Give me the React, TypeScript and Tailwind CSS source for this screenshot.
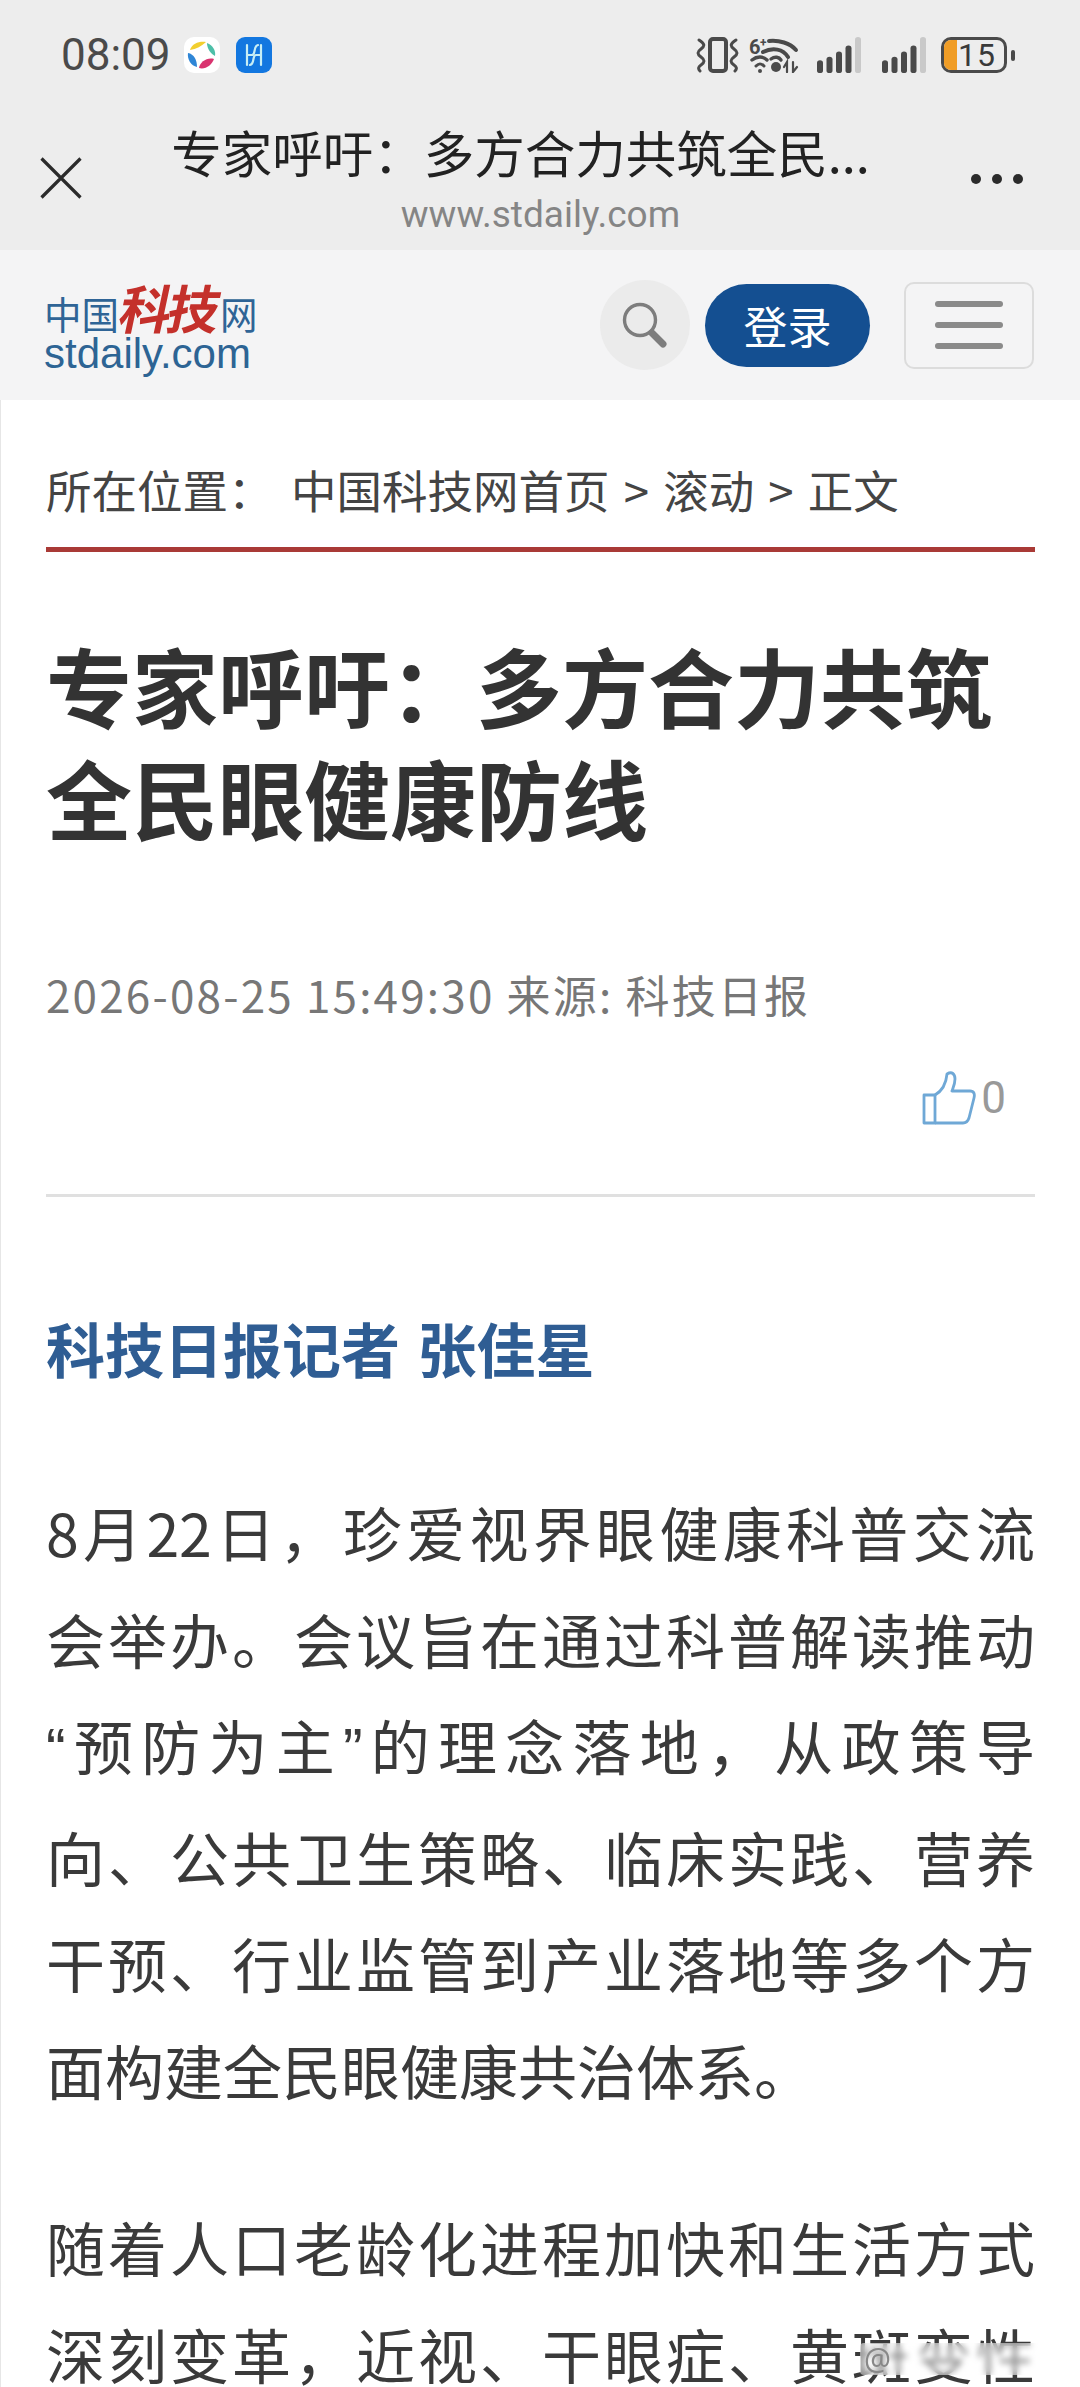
const CJK = "font-['Noto_Sans_CJK_SC','Noto_Sans',sans-serif]";
const COLON = "\uFF1A";
const COMMA = "\uFF0C";

function Wave({ flip }: { flip?: boolean }) {
  return (
    <svg width="10" height="36" viewBox="0 0 10 36" className={flip ? "-scale-x-100" : ""}>
      <path d="M3 3 C9 7 9 9 5 12 C1 15 1 17 5 20 C9 23 9 25 5 28 C2 30 2 32 4 34" fill="none" stroke="#4a4a4a" strokeWidth="3" strokeLinecap="round" />
    </svg>
  );
}

function Signal() {
  const bars = [
    { h: 15, c: "#4a4a4a" },
    { h: 19, c: "#4a4a4a" },
    { h: 25, c: "#4a4a4a" },
    { h: 32, c: "#4a4a4a" },
    { h: 42, c: "#c9c9c9" },
  ];
  return (
    <svg width="46" height="36" viewBox="0 0 46 42" preserveAspectRatio="none">
      {bars.map((b, i) => (
        <rect key={i} x={i * 9.5} y={42 - b.h} width="6" height={b.h} rx="3" fill={b.c} />
      ))}
    </svg>
  );
}

function StatusBar() {
  return (
    <div className="flex h-[40px] items-center justify-between pl-[61px] pr-[65px]">
      <div className="flex items-center">
        <span className="font-['Roboto',sans-serif] text-[44px] leading-[40px] text-[#4a4a4a]">08:09</span>
        <div className="ml-[13px] flex h-[36px] w-[36px] items-center justify-center rounded-[10px] bg-white">
          <svg width="32" height="32" viewBox="0 0 32 32">
            <path d="M4 11 C6 4 14 2 20 3 C16 7 10 10 4 11Z" fill="#f2cf2f" />
            <path d="M21 4 C27 6 30 12 29 17 C25 15 21 10 21 4Z" fill="#4dbfa8" />
            <path d="M2 14 C8 15 11 21 11 28 C5 27 1 20 2 14Z" fill="#2f86d6" />
            <path d="M13 29 C14 23 21 18 28 20 C26 26 19 31 13 29Z" fill="#d9336f" />
          </svg>
        </div>
        <div className="ml-[16px] flex h-[36px] w-[36px] items-center justify-center rounded-[9px] bg-[#1377e0]">
          <svg width="26" height="28" viewBox="0 0 26 28" fill="none" stroke="#c8eef5" strokeWidth="2.2" strokeLinecap="round">
            <path d="M6 4 V24" />
            <path d="M20 4 V24" />
            <path d="M6 14 H11 C15 14 12 5 17 4" />
            <path d="M20 14 H15 C11 14 14 23 9 24" />
          </svg>
        </div>
      </div>
      <div className="flex items-center">
        <div className="flex h-[36px] w-[43px] items-center justify-between">
          <Wave />
          <div className="h-[36px] w-[20px] rounded-[5px] border-[4px] border-[#4a4a4a]" />
          <Wave flip />
        </div>
        <svg className="ml-[10px]" width="50" height="36" viewBox="0 0 50 36" fill="none" stroke="#4a4a4a" strokeLinecap="round">
          <text x="0" y="17" fontSize="20" fontWeight="700" fill="#4a4a4a" stroke="none" fontFamily="Roboto">6</text>
          <text x="11" y="10" fontSize="12" fontWeight="700" fill="#4a4a4a" stroke="none" fontFamily="Roboto">+</text>
          <path d="M20 4 C30 3 41 6 47 13" strokeWidth="4" />
          <path d="M14 15 C24 10 34 12 39 20" strokeWidth="4" />
          <path d="M3 23 C8 19 14 19 18 23" strokeWidth="3.4" />
          <path d="M7 29 C10 26 12 26 15 29" strokeWidth="3" />
          <circle cx="11" cy="34" r="2" fill="#4a4a4a" stroke="none" />
          <path d="M22 22 C26 19 30 20 32 23" strokeWidth="3.4" />
          <circle cx="27" cy="30" r="5" fill="#4a4a4a" stroke="none" />
          <path d="M38 35 V25 L35 30 M44 25 V35 L48 30" strokeWidth="2.2" />
        </svg>
        <div className="ml-[18px]"><Signal /></div>
        <div className="ml-[19px]"><Signal /></div>
        <div className="relative ml-[13px] flex h-[36px] w-[66px] items-center justify-center overflow-hidden rounded-[10px] border-[3px] border-[#4a4a4a]">
          <div className="absolute bottom-0 left-0 top-0 w-[13px] bg-[#f09d26]" />
          <span className="relative pl-[6px] font-['Roboto',sans-serif] text-[32px] leading-[30px] tracking-[1px] text-[#3a3a3a]">15</span>
        </div>
        <div className="ml-[4px] h-[11px] w-[4px] rounded-full bg-[#4a4a4a]" />
      </div>
    </div>
  );
}

function Header() {
  return (
    <div className="h-[250px] bg-[#ededed] pt-[35px]">
      <StatusBar />
      <div className="flex items-start pl-[40px] pr-[57px] pt-[46px]">
        <svg className="mt-[36px]" width="42" height="42" viewBox="0 0 42 42" fill="none" stroke="#2b2b2b" strokeWidth="3.2">
          <path d="M1.5 1.5 L40.5 40.5 M40.5 1.5 L1.5 40.5" />
        </svg>
        <div className="flex flex-1 flex-col items-center">
          <div className={`${CJK} whitespace-nowrap pr-[12px] text-[50.5px] leading-[60px] text-[#222]`}>{`专家呼吁${COLON}多方合力共筑全民...`}</div>
          <div className="mt-[12px] pl-[28px] font-['Roboto',sans-serif] text-[37px] leading-[44px] text-[#858585]">www.stdaily.com</div>
        </div>
        <div className="mt-[53px] flex gap-[11px]">
          <span className="h-[10px] w-[10px] rounded-full bg-[#2b2b2b]" />
          <span className="h-[10px] w-[10px] rounded-full bg-[#2b2b2b]" />
          <span className="h-[10px] w-[10px] rounded-full bg-[#2b2b2b]" />
        </div>
      </div>
    </div>
  );
}

function Nav() {
  return (
    <div className="flex h-[150px] items-center bg-[#f4f4f5] pl-[44px] pr-[46px]">
      <div className="mb-[4px] flex w-[212px] flex-none flex-col">
        <div className={`${CJK} flex h-[62px] items-end whitespace-nowrap text-[37.5px] leading-[42px] text-[#2f6496]`}>
          <span className="flex-none">中国</span>
          <span className="ml-[2px] w-[99px] flex-none -skew-x-12 text-[52px] font-bold leading-[54px] tracking-[-4px] text-[#c4302b]">科技</span>
          <span className="flex-none">网</span>
        </div>
        <div className="font-['Liberation_Sans',sans-serif] text-[42px] leading-[40px] text-[#2d6494]">stdaily.com</div>
      </div>
      <div className="ml-auto flex items-center">
        <div className="flex h-[90px] w-[90px] items-center justify-center rounded-full bg-[#ebebeb]">
          <svg width="50" height="50" viewBox="0 0 50 50" fill="none" stroke="#7d7d7d">
            <circle cx="20" cy="20" r="15.5" strokeWidth="3.4" />
            <path d="M32 33 L43 44" strokeWidth="7" strokeLinecap="round" />
          </svg>
        </div>
        <div className={`${CJK} ml-[15px] flex h-[83px] w-[165px] items-center justify-center rounded-full bg-[#144f91] text-[44px] text-white`}>登录</div>
        <div className="ml-[34px] flex h-[87px] w-[130px] flex-col items-center justify-center gap-[15px] rounded-[10px] border-2 border-[#dcdcdc]">
          <span className="h-[6px] w-[68px] rounded-full bg-[#8a8a8a]" />
          <span className="h-[6px] w-[68px] rounded-full bg-[#8a8a8a]" />
          <span className="h-[6px] w-[68px] rounded-full bg-[#8a8a8a]" />
        </div>
      </div>
    </div>
  );
}

const para1 = [
  `8月22日${COMMA}珍爱视界眼健康科普交流`,
  "会举办。会议旨在通过科普解读推动",
];
const para1b = [
  "向、公共卫生策略、临床实践、营养",
  "干预、行业监管到产业落地等多个方",
];
const para2 = ["随着人口老龄化进程加快和生活方式", `深刻变革${COMMA}近视、干眼症、黄斑变性`];

function Line({ text }: { text: string }) {
  return <div className="text-justify [text-align-last:justify]">{text}</div>;
}

function Article() {
  return (
    <div className={`${CJK} border-l border-[#e6e6e6] px-[45px]`} lang="zh-CN">
      <div className="flex h-[152px] items-end border-b-[5px] border-[#a93a36] pb-[31px] text-[45.5px] leading-[54px] text-[#444]">
        <span className="w-[245px]">{`所在位置${COLON}`}</span>
        <span className="[word-spacing:4px]">中国科技网首页 &gt; 滚动 &gt; 正文</span>
      </div>
      <h1 className="mt-[77px] text-[86px] font-bold leading-[112px] text-[#333]">
        {`专家呼吁${COLON}多方合力共筑`}
        <br />
        全民眼健康防线
      </h1>
      <div className="mt-[116px] flex h-[50px] items-center text-[44px] leading-[50px] text-[#777]">
        <span className="tracking-[2.2px]">2026-08-25 15:49:30 来源: 科技日报</span>
      </div>
      <div className="mt-[53px] flex h-[52px] items-center justify-end pr-[29px]">
        <svg width="54" height="54" viewBox="0 0 54 54" fill="none" stroke="#6fa8d6" strokeWidth="2.8" strokeLinejoin="round">
          <path d="M2 24 H13 V52 H2 Z" />
          <path d="M13 24 C20 20 24 14 25 3 C30 0 33 3 33 8 C33 13 31 17 30 20 H48 C52 20 53 23 52 27 L47 47 C46 50 44 52 41 52 H13" />
        </svg>
        <span className="ml-[5px] font-['Roboto',sans-serif] text-[44px] leading-[52px] text-[#999]">0</span>
      </div>
      <div className="mt-[70px] h-[3px] bg-[#e0e0e0]" />
      <div className="mt-[117px] text-[59px] font-bold leading-[68px] text-[#2f5d93] [word-spacing:4px]">科技日报记者 张佳星</div>
      <div className="mt-[97px] text-[59px] leading-[106.5px] text-[#3a3a3a]">
        {para1.map((t) => (
          <Line key={t} text={t} />
        ))}
        <div className="text-justify [text-align-last:justify]">
          <span className="font-['Liberation_Sans',sans-serif]">“</span>预防为主<span className="font-['Liberation_Sans',sans-serif]">”</span>{`的理念落地${COMMA}从政策导`}
        </div>
        {para1b.map((t) => (
          <Line key={t} text={t} />
        ))}
        <div>面构建全民眼健康共治体系。</div>
      </div>
      <div className="mt-[70px] text-[59px] leading-[107px] text-[#3a3a3a]">
        {para2.map((t) => (
          <Line key={t} text={t} />
        ))}
      </div>
    </div>
  );
}

export default function App() {
  return (
    <div className="relative h-[2387px] w-[1080px] overflow-hidden bg-white">
      <Header />
      <Nav />
      <Article />
      <div className="absolute bottom-[12px] right-[5px] flex h-[32px] w-[215px] items-center rounded-[4px] bg-white/45 pl-[4px] text-[30px] leading-[32px] text-[#888] backdrop-blur-[3px]">
        <span className="blur-[0.5px]">@</span>
      </div>
    </div>
  );
}
